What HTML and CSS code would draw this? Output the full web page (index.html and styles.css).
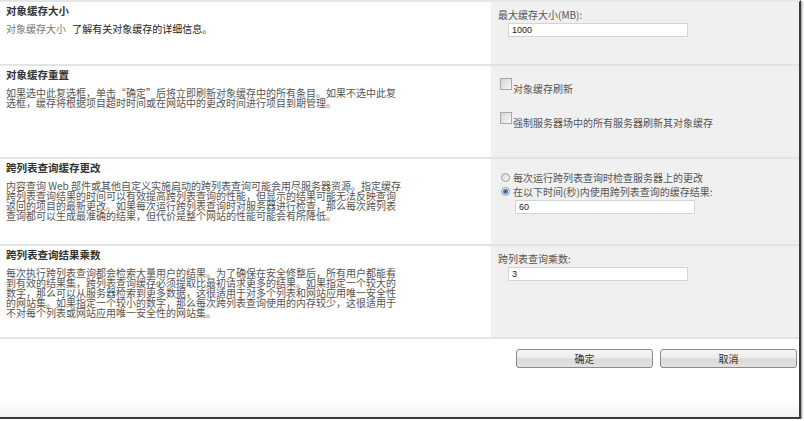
FILE: index.html
```html
<!DOCTYPE html>
<html lang="zh-CN">
<head>
    <meta charset="UTF-8">
    <title>对象缓存设置</title>
    <link rel="stylesheet" href="styles.css">
</head>
<body>
    <div class="frame">
        <div class="section s1">
            <div class="desc">
                <div class="title">对象缓存大小</div>
                <div class="text"><span class="muted">对象缓存大小</span> <span class="link">了解有关对象缓存的详细信息。</span></div>
            </div>
            <div class="ctrl">
                <div class="label">最大缓存大小(MB):</div>
                <input type="text" class="box" value="1000">
            </div>
        </div>

        <div class="section s2">
            <div class="desc">
                <div class="title">对象缓存重置</div>
                <div class="text">如果选中此复选框，单击“确定”后将立即刷新对象缓存中的所有条目。如果不选中此复<br>选框，缓存将根据项目超时时间或在网站中的更改时间进行项目到期管理。</div>
            </div>
            <div class="ctrl">
                <div class="check-row first">
                    <input type="checkbox" class="check">
                    <span class="check-label">对象缓存刷新</span>
                </div>
                <div class="check-row second">
                    <input type="checkbox" class="check">
                    <span class="check-label">强制服务器场中的所有服务器刷新其对象缓存</span>
                </div>
            </div>
        </div>

        <div class="section s3">
            <div class="desc">
                <div class="title">跨列表查询缓存更改</div>
                <div class="text">内容查询 Web 部件或其他自定义实施启动的跨列表查询可能会用尽服务器资源。指定缓存<br>跨列表查询结果的时间可以有效提高跨列表查询的性能，但显示的结果可能无法反映查询<br>返回的项目的最新更改。如果每次运行跨列表查询时对服务器进行检查，那么每次跨列表<br>查询都可以生成最准确的结果，但代价是整个网站的性能可能会有所降低。</div>
            </div>
            <div class="ctrl">
                <div class="radio-row first">
                    <input type="radio" name="cache" class="radio">
                    <span>每次运行跨列表查询时检查服务器上的更改</span>
                </div>
                <div class="radio-row">
                    <input type="radio" name="cache" class="radio" checked>
                    <span>在以下时间(秒)内使用跨列表查询的缓存结果:</span>
                </div>
                <input type="text" class="box indent" value="60">
            </div>
        </div>

        <div class="section s4">
            <div class="desc">
                <div class="title">跨列表查询结果乘数</div>
                <div class="text">每次执行跨列表查询都会检索大量用户的结果。为了确保在安全修整后，所有用户都能看<br>到有效的结果集，跨列表查询缓存必须提取比最初请求更多的结果。如果指定一个较大的<br>数字，那么可以从服务器检索到更多数据，这很适用于对多个列表和网站应用唯一安全性<br>的网站集。如果指定一个较小的数字，那么每次跨列表查询使用的内存较少，这很适用于<br>不对每个列表或网站应用唯一安全性的网站集。</div>
            </div>
            <div class="ctrl">
                <div class="label">跨列表查询乘数:</div>
                <input type="text" class="box" value="3">
            </div>
        </div>

        <div class="actions">
            <button class="btn">确定</button>
            <button class="btn">取消</button>
        </div>
    </div>
</body>
</html>
```

FILE: styles.css
```css
body{
    margin: 0;
    background-color: #fff;
    font-family: "Noto Sans CJK SC", "Liberation Sans", sans-serif;
    font-size: 10px;
    color: #555;
}
.frame{
    width: 799px;
    height: 415px;
    border-top: 2px solid #e6e6e6;
    border-right: 2px solid #3a3a3a;
    border-bottom: 2px solid #3a3a3a;
    box-shadow: 1px 1px 2px rgba(0, 0, 0, 0.45);
    background: linear-gradient(to bottom, #fff 96%, #f2f2f2);
}
.section{
    display: flex;
    border-bottom: 2px solid #e4e4e4;
}
.s1{
    height: 62px;
}
.s2{
    height: 91px;
}
.s3{
    height: 85px;
}
.s4{
    height: 91px;
}
.desc{
    width: 491px;
    padding: 3px 0 0 6px;
    box-sizing: border-box;
    background-color: #fff;
}
.title{
    font-weight: bold;
    font-size: 10.5px;
    line-height: 12px;
    color: #333;
}
.text{
    margin-top: 7px;
    line-height: 10px;
    white-space: nowrap;
}
.muted{
    color: #777;
}
.link{
    margin-left: 4px;
    color: #222;
}
.ctrl{
    flex: 1;
    background-color: #f0f0f0;
    padding-left: 7px;
}
.label{
    padding-top: 7px;
    line-height: 12px;
}
.box{
    display: block;
    width: 180px;
    height: 14px;
    box-sizing: border-box;
    margin: 2px 0 0 10px;
    padding: 0 3px;
    border: 1px solid #d4d4d4;
    background-color: #fff;
    font-family: "Liberation Sans", sans-serif;
    font-size: 9px;
    color: #222;
    outline: none;
}
.box.indent{
    margin: 3px 0 0 17px;
}
.check-row{
    display: flex;
    align-items: flex-start;
    margin-left: 2px;
}
.check-row.first{
    margin-top: 12px;
}
.check-row.second{
    margin-top: 17px;
}
.check{
    appearance: none;
    width: 12px;
    height: 12px;
    margin: 0;
    border: 1px solid #a8a8a8;
    background: linear-gradient(135deg, #d4d4d4, #f8f8f8);
}
.check-label{
    margin-left: 1px;
    padding-top: 5px;
    line-height: 12px;
}
.radio-row{
    display: flex;
    align-items: center;
    height: 12px;
    margin: 2px 0 0 3px;
}
.radio-row.first{
    margin-top: 12px;
}
.radio{
    appearance: none;
    width: 9px;
    height: 9px;
    margin: 0 3px 0 0;
    border: 1px solid #9a9a9a;
    border-radius: 50%;
    background: linear-gradient(135deg, #d6d6d6, #fafafa);
}
.radio:checked{
    background: radial-gradient(circle, #2a5fa8 0, #3d7cc9 2px, #e8eef6 3px, #f6f6f6 5px);
}
.actions{
    display: flex;
    justify-content: flex-end;
    gap: 7px;
    padding: 10px 2px 0 0;
}
.btn{
    width: 137px;
    height: 19px;
    padding: 0;
    border: 1px solid #8a8a8a;
    border-radius: 3px;
    background: linear-gradient(to bottom, #f6f6f6, #ececec 48%, #dadada 52%, #e2e2e2);
    font-family: "Noto Sans CJK SC", sans-serif;
    font-size: 10px;
    color: #333;
}
```
